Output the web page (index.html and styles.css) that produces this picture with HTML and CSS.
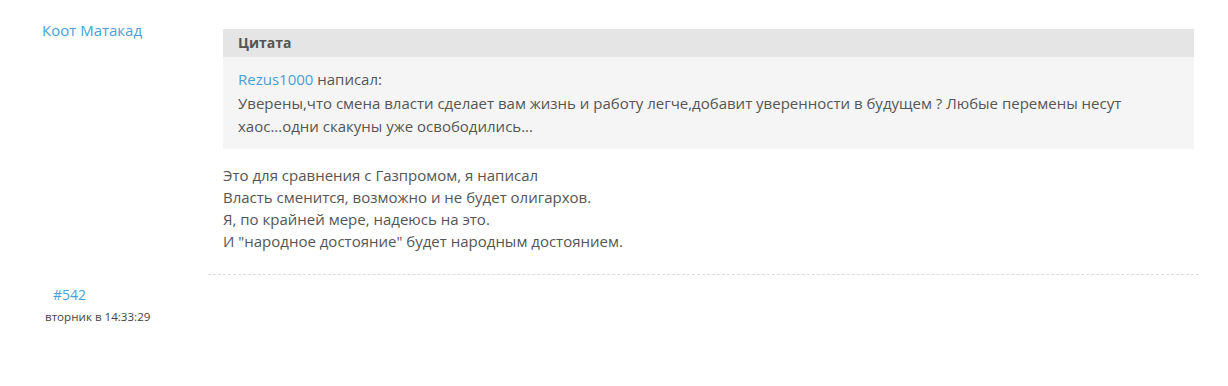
FILE: index.html
```html
<!DOCTYPE html>
<html lang="ru">

<head>
    <meta charset="UTF-8">
    <meta name="viewport" content="width=device-width, initial-scale=1.0">
    <title>Сообщение</title>
    <link rel="stylesheet" href="styles.css">
</head>

<body>
    <div class="post">
        <div class="post-row">
            <div class="author">
                <a href="javascript:;" class="author-name">Коот Матакад</a>
            </div>
            <div class="content">
                <div class="quote">
                    <div class="quote-title">Цитата</div>
                    <div class="quote-body">
                        <a href="javascript:;" class="link">Rezus1000</a> написал:<br>
                        Уверены,что смена власти сделает вам жизнь и работу легче,добавит уверенности в будущем ? Любые перемены несут хаос...одни скакуны уже освободились...
                    </div>
                </div>
                <div class="message">
                    Это для сравнения с Газпромом, я написал<br>
                    Власть сменится, возможно и не будет олигархов.<br>
                    Я, по крайней мере, надеюсь на это.<br>
                    И "народное достояние" будет народным достоянием.
                </div>
            </div>
        </div>
        <div class="post-footer">
            <a href="javascript:;" class="post-num">#542</a>
            <div class="post-date">вторник в 14:33:29</div>
        </div>
    </div>
</body>

</html>
```

FILE: styles.css
```css
body {
    margin: 0;
    background: #fff;
    font-family: "Open Sans", "Liberation Sans", sans-serif;
    font-size: 15px;
    color: #555;
}

a {
    text-decoration: none;
    color: #4a9fd6;
}

.post {
    width: 1228px;
}

.post-row {
    display: flex;
    padding-top: 20px;
}

.author {
    width: 208px;
    flex-shrink: 0;
    padding-left: 42px;
    box-sizing: border-box;
    line-height: 20px;
}

.content {
    width: 991px;
    padding-top: 9px;
    border-bottom: 1px dashed #ddd;
}

.quote {
    margin-left: 15px;
    margin-right: 5px;
    background: #f5f5f5;
}

.quote-title {
    height: 28px;
    line-height: 28px;
    padding-left: 15px;
    background: #e5e5e5;
    font-size: 14px;
    font-weight: bold;
    color: #555;
}

.quote-body {
    padding: 11px 15px 10px 15px;
    line-height: 23.5px;
}

.message {
    padding: 15px 0 22px 15px;
    line-height: 22px;
}

.post-footer {
    padding: 10px 0 0 45px;
}

.post-num {
    display: block;
    margin-left: 8px;
    line-height: 20px;
    font-size: 14px;
}

.post-date {
    margin-top: 4px;
    line-height: 16px;
    font-size: 11.6px;
    color: #444;
}
```
